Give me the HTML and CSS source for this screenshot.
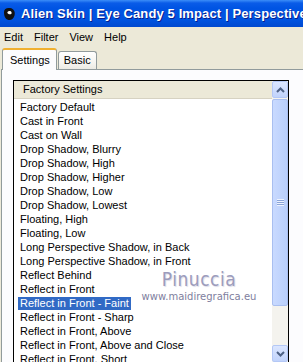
FILE: index.html
```html
<!DOCTYPE html>
<html lang="en">
<head>
    <meta charset="UTF-8">
    <title>Alien Skin | Eye Candy 5 Impact | Perspective Shadow</title>
    <link rel="stylesheet" href="styles.css">
</head>
<body>
    <div class="titlebar">
        <svg class="app-icon" width="14" height="14" viewBox="0 0 14 14">
            <path d="M2 5 C2 1.5 5 0.5 8 1 C12 1.6 13.5 5 12.5 8.5 C11.5 12 9 13.5 6.5 13 C3 12.3 2 8.5 2 5 Z" fill="#111"/>
            <path d="M5.5 5 C6.5 3.6 9 3.8 9.6 5.4 C10 6.8 8.4 7.6 7 7.2 C5.8 6.9 5 6 5.5 5 Z" fill="#fff"/>
        </svg>
        <span class="title-text">Alien Skin | Eye Candy 5 Impact | Perspective Shadow</span>
    </div>

    <div class="menubar">
        <span class="menu-item">Edit</span>
        <span class="menu-item">Filter</span>
        <span class="menu-item">View</span>
        <span class="menu-item">Help</span>
    </div>

    <div class="tabs">
        <div class="tab tab-active">Settings</div>
        <div class="tab">Basic</div>
    </div>

    <div class="panel">
        <div class="listbox">
            <div class="list-main">
                <div class="list-header">Factory Settings</div>
                <ul class="list-items">
                    <li><span>Factory Default</span></li>
                    <li><span>Cast in Front</span></li>
                    <li><span>Cast on Wall</span></li>
                    <li><span>Drop Shadow, Blurry</span></li>
                    <li><span>Drop Shadow, High</span></li>
                    <li><span>Drop Shadow, Higher</span></li>
                    <li><span>Drop Shadow, Low</span></li>
                    <li><span>Drop Shadow, Lowest</span></li>
                    <li><span>Floating, High</span></li>
                    <li><span>Floating, Low</span></li>
                    <li><span>Long Perspective Shadow, in Back</span></li>
                    <li><span>Long Perspective Shadow, in Front</span></li>
                    <li><span>Reflect Behind</span></li>
                    <li><span>Reflect in Front</span></li>
                    <li class="selected"><span>Reflect in Front - Faint</span></li>
                    <li><span>Reflect in Front - Sharp</span></li>
                    <li><span>Reflect in Front, Above</span></li>
                    <li><span>Reflect in Front, Above and Close</span></li>
                    <li><span>Reflect in Front, Short</span></li>
                    <li><span>Reflect in Front, Tall</span></li>
                </ul>
            </div>
            <div class="scrollbar">
                <div class="scroll-btn">
                    <svg width="9" height="6" viewBox="0 0 9 6"><polyline points="1,5 4.5,1.5 8,5" fill="none" stroke="#4d6185" stroke-width="2"/></svg>
                </div>
                <div class="scroll-thumb">
                    <div class="grip"></div>
                </div>
                <div class="scroll-track"></div>
                <div class="scroll-btn">
                    <svg width="9" height="6" viewBox="0 0 9 6"><polyline points="1,1 4.5,4.5 8,1" fill="none" stroke="#4d6185" stroke-width="2"/></svg>
                </div>
            </div>
        </div>

        <div class="watermark">
            <div class="wm-name">Pinuccia</div>
            <div class="wm-url">www.maidiregrafica.eu</div>
        </div>
    </div>
</body>
</html>
```

FILE: styles.css
```css
body {
    margin: 0;
    width: 303px;
    height: 362px;
    overflow: hidden;
    background-color: #ece9d8;
    font-family: 'Liberation Sans', Arial, sans-serif;
    font-size: 11px;
    color: #000;
}

/* XP style caption */
.titlebar {
    height: 27px;
    display: flex;
    align-items: center;
    padding-left: 2px;
    background: linear-gradient(#3c8ef8 0, #0a5ce8 3px, #0054e3 8px, #0053e0 20px, #0049cf 27px);
    white-space: nowrap;
    overflow: hidden;
}
.app-icon {
    flex: none;
    margin-right: 5px;
}
.title-text {
    color: #fff;
    font-weight: bold;
    font-size: 13px;
    letter-spacing: 0.12px;
    text-shadow: 1px 1px 0 #0a1e8c;
}

.menubar {
    height: 19px;
    display: flex;
    align-items: center;
    padding-left: 4px;
    gap: 11px;
}

.tabs {
    display: flex;
    align-items: flex-end;
    height: 23px;
    padding-left: 2px;
}
.tab {
    height: 17px;
    padding: 0 5px;
    line-height: 17px;
    border: 1px solid #919b9c;
    border-bottom: none;
    border-radius: 3px 3px 0 0;
    background: linear-gradient(#fff, #f4f3ee 70%, #ebeae3);
    margin-left: 1px;
}
.tab-active {
    position: relative;
    height: 20px;
    line-height: 21px;
    padding: 0 6px 0 7px;
    margin-left: 0;
    margin-bottom: -1px;
    background: #fcfcfe;
    border-top: 2px solid #f0b030;
    z-index: 1;
}

.panel {
    position: relative;
    width: 284px;
    height: 300px;
    margin-left: 1px;
    padding: 10px 8px 0 11px;
    border: 1px solid #919b9c;
    border-bottom: none;
    background: #fcfcfe;
}

.listbox {
    display: flex;
    width: 274px;
    height: 281px;
    border: 1px solid #000;
    background: #fff;
}
.list-main {
    flex: 1;
    overflow: hidden;
}
.list-header {
    height: 17px;
    line-height: 17px;
    padding-left: 9px;
    background: #ece9d8;
    border-bottom: 1px solid #d6d2c2;
    white-space: nowrap;
}
.list-items {
    list-style: none;
    margin: 0;
    padding: 1px 0 0 4px;
    white-space: nowrap;
}
.list-items li {
    height: 14px;
    line-height: 14px;
}
.list-items span {
    padding: 0 2px;
}
.list-items .selected span {
    display: inline-block;
    background: #316ac5;
    color: #fff;
    height: 13px;
    line-height: 13px;
}

.scrollbar {
    width: 16px;
    display: flex;
    flex-direction: column;
    background: #f4f3ee;
}
.scroll-btn {
    height: 15px;
    flex: none;
    display: flex;
    align-items: center;
    justify-content: center;
    border: 1px solid #b4c8f6;
    border-radius: 2px;
    background: linear-gradient(#dbe6ff, #c1d3fb);
    box-sizing: content-box;
    width: 14px;
}
.scroll-thumb {
    height: 205px;
    margin-top: 1px;
    flex: none;
    display: flex;
    align-items: center;
    justify-content: center;
    border: 1px solid #a9bff0;
    border-radius: 2px;
    background: linear-gradient(90deg, #c9daff, #b9cffb);
    width: 14px;
}
.grip {
    width: 7px;
    height: 7px;
    background: repeating-linear-gradient(#eef3ff 0, #eef3ff 1px, #8aa4d8 1px, #8aa4d8 2px);
}
.scroll-track {
    flex: 1;
}

.watermark {
    position: absolute;
    left: 135px;
    top: 200px;
    width: 124px;
    text-align: center;
    white-space: nowrap;
}
.wm-name {
    font-family: 'DejaVu Sans Condensed', 'DejaVu Sans', sans-serif;
    font-size: 19px;
    line-height: 19px;
    letter-spacing: 0.5px;
    color: #9c9cbc;
    text-shadow: 1px 1px 1px #dcdce8;
}
.wm-url {
    margin-top: 2px;
    font-family: 'DejaVu Sans', sans-serif;
    font-size: 10px;
    line-height: 12px;
    color: #80809e;
}
```
